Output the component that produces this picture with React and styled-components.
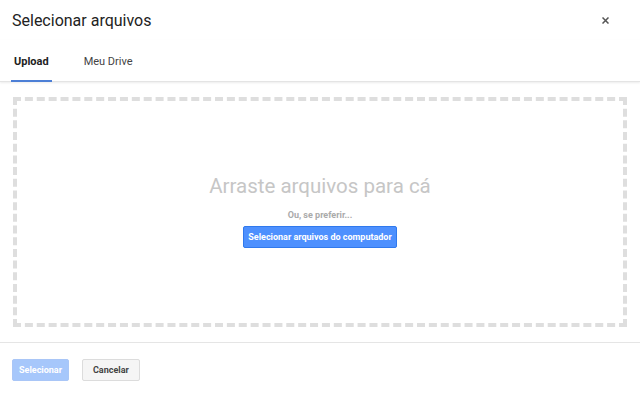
import React, { useState } from 'react';
import styled, { createGlobalStyle } from 'styled-components';

const GlobalStyle = createGlobalStyle`
  html, body {
    margin: 0;
    padding: 0;
    background: #fff;
    font-family: Roboto, "Liberation Sans", Arial, sans-serif;
  }
`;

const Dialog = styled.div`
  width: 640px;
  height: 394px;
  display: flex;
  flex-direction: column;
  background: #fff;
  overflow: hidden;
`;

const Header = styled.div`
  height: 40px;
  display: flex;
  align-items: center;
  justify-content: space-between;
  padding: 0 31px 0 12px;
  box-sizing: border-box;
`;

const Title = styled.h1`
  margin: 0;
  font-size: 16px;
  font-weight: 400;
  color: #222;
  padding-top: 1px;
`;

const Close = styled.button`
  border: 0;
  background: none;
  padding: 0;
  width: 8px;
  height: 8px;
  display: flex;
  align-items: center;
  justify-content: center;
  cursor: pointer;
`;

const Tabs = styled.div`
  height: 41px;
  display: flex;
  align-items: stretch;
  padding-left: 11px;
  border-bottom: 1px solid #e4e4e4;
  box-shadow: 0 1px 2px rgba(0, 0, 0, 0.08);
  position: relative;
  z-index: 1;
`;

const Tab = styled.div`
  display: flex;
  align-items: center;
  padding: 2px 3px 0;
  margin-right: ${p => (p.$active ? '29px' : '0')};
  font-size: 11px;
  font-weight: ${p => (p.$active ? 700 : 400)};
  color: ${p => (p.$active ? '#222' : '#444')};
  border-bottom: 2px solid ${p => (p.$active ? '#4d7fd6' : 'transparent')};
  margin-bottom: -1px;
  cursor: pointer;
`;

const Content = styled.div`
  flex: 1;
  padding: 15px 13px 15px;
  box-sizing: border-box;
  border-bottom: 1px solid #e5e5e5;
  display: flex;
`;

const DropZone = styled.div`
  flex: 1;
  border: 4px dashed #dedede;
  display: flex;
  flex-direction: column;
  align-items: center;
  justify-content: center;
  padding-bottom: 2px;
`;

const DropText = styled.div`
  font-size: 20.5px;
  color: #c6c6c6;
  margin-bottom: 12px;
`;

const OrText = styled.div`
  font-size: 9px;
  font-weight: 700;
  color: #aaa;
  margin-bottom: 6px;
`;

const Button = styled.button`
  font-family: Roboto, "Liberation Sans", Arial, sans-serif;
  font-size: 9px;
  font-weight: 700;
  height: 22px;
  padding: 0 ${p => p.$pad || 7}px;
  border-radius: 2px;
  cursor: pointer;
  border: 1px solid ${p => p.$variant === 'primary' ? '#3079ed' : p.$variant === 'disabled' ? '#a9c6f7' : '#dcdcdc'};
  background: ${p => p.$variant === 'primary' ? '#4d90fe' : p.$variant === 'disabled' ? '#a6c7fb' : '#f5f5f5'};
  color: ${p => p.$variant === 'secondary' ? '#444' : '#fff'};
`;

const Footer = styled.div`
  height: 51px;
  box-sizing: border-box;
  display: flex;
  align-items: flex-start;
  gap: 13px;
  padding: 16px 12px 0;
`;

export default function App() {
  const [tab, setTab] = useState('upload');
  return (
    <>
      <GlobalStyle />
      <Dialog>
        <Header>
          <Title>Selecionar arquivos</Title>
          <Close aria-label="Fechar">
            <svg width="7" height="7" viewBox="0 0 7 7">
              <path d="M0.5 0.5L6.5 6.5M6.5 0.5L0.5 6.5" stroke="#555" strokeWidth="1.5" />
            </svg>
          </Close>
        </Header>
        <Tabs>
          <Tab $active={tab === 'upload'} onClick={() => setTab('upload')}>Upload</Tab>
          <Tab $active={tab === 'drive'} onClick={() => setTab('drive')}>Meu Drive</Tab>
        </Tabs>
        <Content>
          <DropZone>
            <DropText>Arraste arquivos para cá</DropText>
            <OrText>Ou, se preferir...</OrText>
            <Button $variant="primary" $pad={4}>Selecionar arquivos do computador</Button>
          </DropZone>
        </Content>
        <Footer>
          <Button $variant="disabled" $pad={6}>Selecionar</Button>
          <Button $variant="secondary" $pad={10}>Cancelar</Button>
        </Footer>
      </Dialog>
    </>
  );
}
